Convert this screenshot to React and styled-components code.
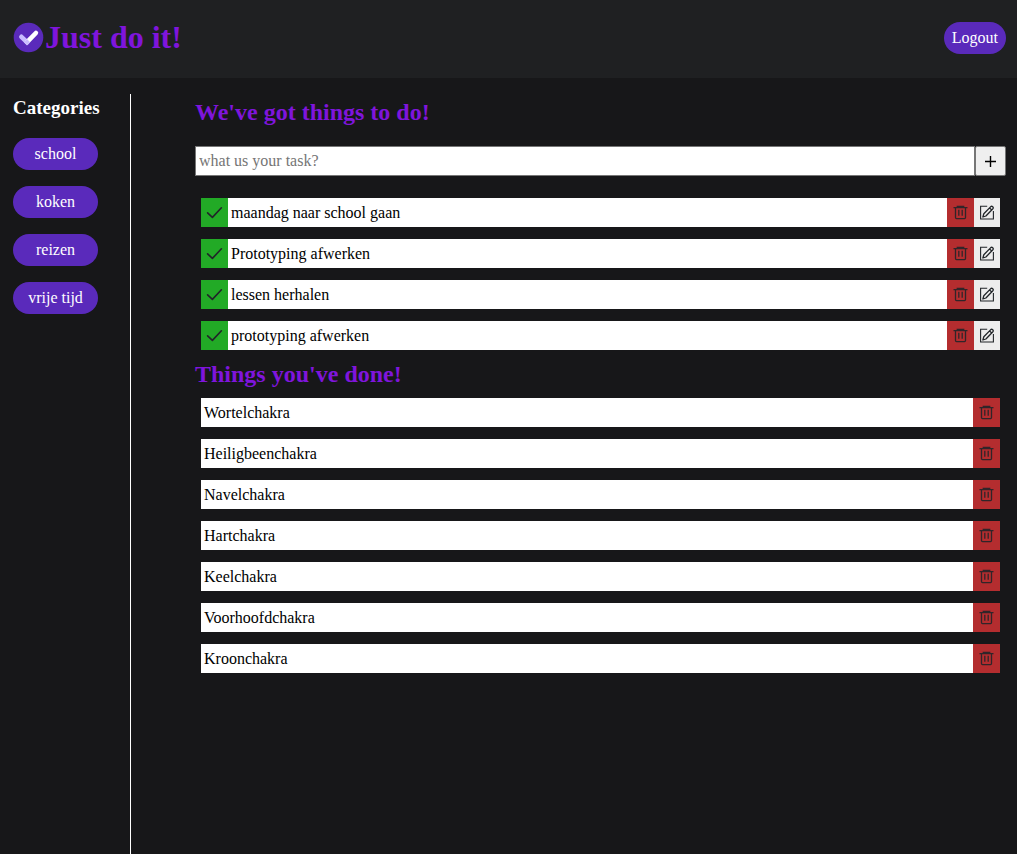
import React from "react";
import styled, { createGlobalStyle } from "styled-components";

const GlobalStyle = createGlobalStyle`
  * { box-sizing: border-box; }
  body {
    margin: 0;
    background: #171719;
    color: #fff;
    font-family: "Liberation Serif", "Times New Roman", serif;
    font-size: 16px;
  }
  button, input { font: inherit; }
`;

const Page = styled.div`
  min-height: 100vh;
  display: flex;
  flex-direction: column;
`;

const Header = styled.header`
  display: flex;
  align-items: center;
  justify-content: space-between;
  height: 78px;
  padding: 0 11px 2px 13px;
  background: #1f2022;
`;

const Brand = styled.div`
  display: flex;
  align-items: center;
  gap: 1px;
  padding-bottom: 2px;
`;

const Title = styled.h1`
  margin: 0;
  font-size: 32px;
  line-height: 36px;
  color: #7f15dc;
`;

const Pill = styled.button`
  height: 32px;
  padding: 0 8px;
  border: 0;
  border-radius: 16px;
  background: #5a2abb;
  color: #fff;
  line-height: 18px;
  white-space: nowrap;
  cursor: pointer;
`;

const Body = styled.div`
  flex: 1;
  display: flex;
  padding-top: 16px;
`;

const Sidebar = styled.nav`
  flex: none;
  display: flex;
  width: 131px;
  padding: 0 32px 16px 13px;
  flex-direction: column;
  gap: 16px;
  border-right: 1px solid #fff;
`;

const SidebarTitle = styled.h3`
  margin: 0;
  font-size: 19px;
  line-height: 28px;
`;

const Main = styled.main`
  flex: 1;
  min-width: 0;
  padding: 0 11px 16px 64px;
`;

const SectionTitle = styled.h2`
  margin: 0;
  font-size: 24px;
  line-height: 36px;
  color: #7f15dc;
`;

const TaskForm = styled.form`
  display: flex;
  height: 30px;
  margin: 16px 0 22px;
`;

const TaskInput = styled.input`
  flex: 1;
  min-width: 0;
  padding: 0 3px;
  border: 1px solid #767676;
  border-radius: 0;
  background: #fff;
  color: #000;
  &::placeholder { color: #757575; }
`;

const AddButton = styled.button`
  display: flex;
  align-items: center;
  justify-content: center;
  width: 31px;
  padding: 0;
  border: 1px solid #767676;
  border-radius: 2px;
  background: #efefef;
  color: #000;
  cursor: pointer;
`;

const List = styled.ul`
  display: flex;
  flex-direction: column;
  gap: 12px;
  margin: 0;
  padding: 0 6px;
  list-style: none;
`;

const Row = styled.li`
  display: flex;
  height: 29px;
  background: #fff;
  color: #000;
`;

const RowText = styled.span`
  flex: 1;
  padding: 0 3px;
  line-height: 29px;
`;

const tones = { done: "#22aa26", remove: "#b42d2f", edit: "#ededed" };

const IconButton = styled.button`
  display: flex;
  align-items: center;
  justify-content: center;
  width: ${(p) => (p.$tone === "edit" ? 26 : 27)}px;
  padding: 0;
  border: 0;
  background: ${(p) => tones[p.$tone]};
  color: #212529;
  cursor: pointer;
`;

const DoneHeading = styled(SectionTitle)`
  margin: 6px 0;
`;

const Logo = () => (
  <svg width="31" height="31" viewBox="0 0 31 31" fill="none" aria-hidden="true">
    <circle cx="15.5" cy="15.5" r="14.8" fill="#5a2abb" />
    <path d="M8.4 14.8L14 20.2" stroke="#c9bcff" strokeWidth="4.6" strokeLinecap="round" />
    <path d="M14 20.2L22.9 11" stroke="#fff" strokeWidth="4.6" strokeLinecap="round" />
    <path d="M10.8 20.3L14 17L17.2 20.2L14 23.5Z" fill="#c9bcff" />
  </svg>
);

const CheckIcon = () => (
  <svg width="17" height="15" viewBox="0 0 17 15" fill="none" stroke="currentColor" strokeWidth="1.6" strokeLinecap="round" strokeLinejoin="round" aria-hidden="true">
    <path d="M1.6 7.8L6.4 12.4L15.4 2.8" />
  </svg>
);

const TrashIcon = () => (
  <svg width="15" height="15" viewBox="0 0 15 15" fill="none" stroke="currentColor" strokeOpacity=".9" strokeWidth="1.3" aria-hidden="true">
    <path d="M.5 2.6H14.5M4.3 2.4V1.4H10.7V2.4M2.5 2.8V12.6Q2.5 13.6 3.5 13.6H11.5Q12.5 13.6 12.5 12.6V2.8M5.8 4.8V10.8M9.2 4.8V10.8" />
  </svg>
);

const EditIcon = () => (
  <svg width="14" height="15" viewBox="0 0 14 15" fill="none" stroke="currentColor" aria-hidden="true">
    <path d="M7.2 1.2H.6V14H13.4V6" strokeWidth="1.1" />
    <path d="M2.9 12L3.8 8.8L10.8 1.6Q11.7.8 12.7 1.7Q13.7 2.7 12.9 3.7L5.9 11ZM9.5 2.9L11.7 5" strokeWidth="1.3" strokeLinejoin="round" />
  </svg>
);

const PlusIcon = () => (
  <svg width="13" height="13" viewBox="0 0 13 13" stroke="currentColor" strokeWidth="1.4" aria-hidden="true">
    <path d="M6.5 1V12M1 6.5H12" />
  </svg>
);

const categories = ["school", "koken", "reizen", "vrije tijd"];
const todo = ["maandag naar school gaan", "Prototyping afwerken", "lessen herhalen", "prototyping afwerken"];
const done = ["Wortelchakra", "Heiligbeenchakra", "Navelchakra", "Hartchakra", "Keelchakra", "Voorhoofdchakra", "Kroonchakra"];

export default function App() {
  return (
    <Page>
      <GlobalStyle />
      <Header>
        <Brand>
          <Logo />
          <Title>Just do it!</Title>
        </Brand>
        <Pill type="button">Logout</Pill>
      </Header>
      <Body>
        <Sidebar>
          <SidebarTitle>Categories</SidebarTitle>
          {categories.map((name) => (
            <Pill type="button" key={name}>{name}</Pill>
          ))}
        </Sidebar>
        <Main>
          <SectionTitle>We've got things to do!</SectionTitle>
          <TaskForm onSubmit={(e) => e.preventDefault()}>
            <TaskInput type="text" aria-label="New task" placeholder="what us your task?" />
            <AddButton type="submit" aria-label="Add task"><PlusIcon /></AddButton>
          </TaskForm>
          <List>
            {todo.map((task) => (
              <Row key={task}>
                <IconButton type="button" $tone="done" aria-label={`Complete ${task}`}><CheckIcon /></IconButton>
                <RowText>{task}</RowText>
                <IconButton type="button" $tone="remove" aria-label={`Delete ${task}`}><TrashIcon /></IconButton>
                <IconButton type="button" $tone="edit" aria-label={`Edit ${task}`}><EditIcon /></IconButton>
              </Row>
            ))}
          </List>
          <DoneHeading>Things you've done!</DoneHeading>
          <List>
            {done.map((task) => (
              <Row key={task}>
                <RowText>{task}</RowText>
                <IconButton type="button" $tone="remove" aria-label={`Delete ${task}`}><TrashIcon /></IconButton>
              </Row>
            ))}
          </List>
        </Main>
      </Body>
    </Page>
  );
}
